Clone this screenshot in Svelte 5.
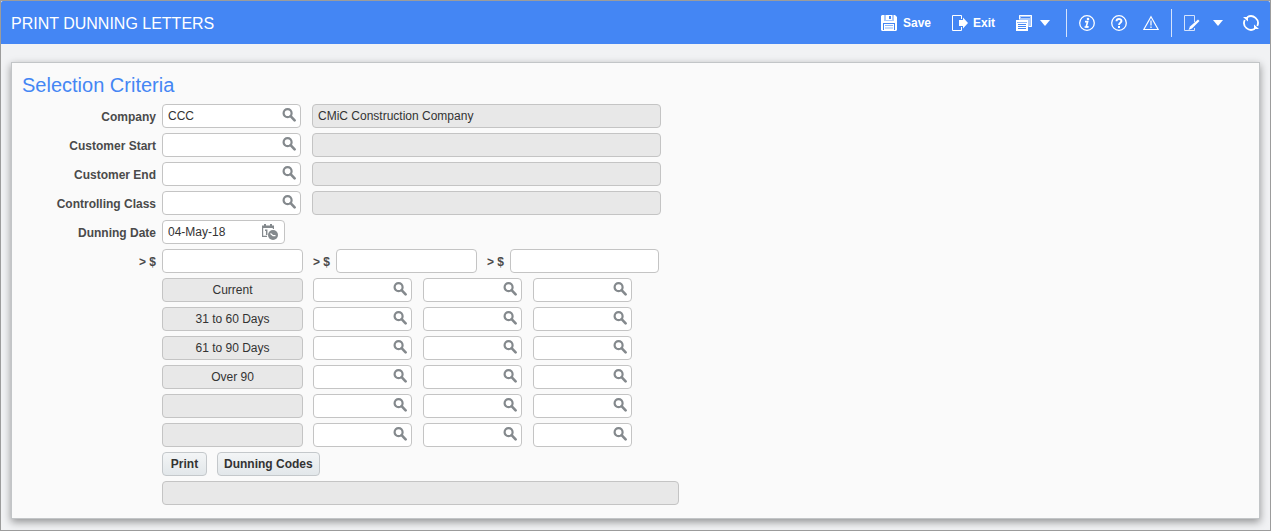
<script>
    let company = $state('CCC');
    let companyName = $state('CMiC Construction Company');
    let dunningDate = $state('04-May-18');
    let message = $state('');

    let selections = $state([
        { id: 'customerStart', label: 'Customer Start', value: '', name: '' },
        { id: 'customerEnd', label: 'Customer End', value: '', name: '' },
        { id: 'controllingClass', label: 'Controlling Class', value: '', name: '' }
    ]);

    let amounts = $state(['', '', '']);

    let agings = $state([
        { period: 'Current', codes: ['', '', ''] },
        { period: '31 to 60 Days', codes: ['', '', ''] },
        { period: '61 to 90 Days', codes: ['', '', ''] },
        { period: 'Over 90', codes: ['', '', ''] },
        { period: '', codes: ['', '', ''] },
        { period: '', codes: ['', '', ''] }
    ]);
</script>

{#snippet searchButton(title)}
    <button type="button" class="pick" aria-label={title}>
        <svg width="14" height="14" viewBox="0 0 14 14" fill="none" stroke="#84898d">
            <circle cx="5.6" cy="5.2" r="4" stroke-width="2.2" />
            <path d="M8.6 8.2L12.6 12.4" stroke-width="2.6" stroke-linecap="round" />
        </svg>
    </button>
{/snippet}

<div class="page">
    <header>
        <h1>PRINT DUNNING LETTERS</h1>
        <div class="toolbar">
            <button type="button" class="tool save">
                <svg width="16" height="16" viewBox="0 0 16 16">
                    <path d="M1 0H14L16 2V15L15 16H1L0 15V1Z" fill="#fff" />
                    <path d="M3 0H13V6H3Z" fill="#a9c8fb" />
                    <path d="M5 0H11V5H5Z" fill="#fff" />
                    <path d="M8 1H10V4H8Z" fill="#4486f4" />
                    <path d="M2 8H14V15H2Z" fill="#4486f4" />
                    <path d="M3 9H13V15H3Z" fill="#fff" />
                    <path d="M4 10.5H12M4 13H12" stroke="#8db6f9" />
                </svg>
                Save
            </button>
            <button type="button" class="tool exit">
                <svg width="16" height="16" viewBox="0 0 16 16">
                    <path d="M9.5 4V.5H.5V15.5H9.5V12" fill="none" stroke="#fff" />
                    <path d="M7 5H11V2.5L16 8L11 13.5V11H7Z" fill="#fff" />
                </svg>
                Exit
            </button>
            <button type="button" class="tool reports" aria-label="Reports">
                <svg width="16" height="16" viewBox="0 0 16 16">
                    <path d="M3 0H16V12H12V5H3Z" fill="#a9c8fb" />
                    <path d="M3.5 4V.5H15.5V11.5H13" fill="none" stroke="#fff" />
                    <path d="M5 2.5H14" stroke="#4486f4" />
                    <path d="M0 5H12V16H0Z" fill="#fff" />
                    <path d="M1 7.5H11" stroke="#8db6f9" />
                    <path d="M2 9.5H10M2 11.5H10M2 13.5H10" stroke="#4486f4" />
                </svg>
                <svg width="10" height="6" viewBox="0 0 10 6"><path d="M0 0H10L5 6Z" fill="#fff" /></svg>
            </button>
            <span class="divider"></span>
            <button type="button" class="tool" aria-label="Information">
                <svg width="16" height="16" viewBox="0 0 16 16">
                    <circle cx="8" cy="8" r="7.3" fill="none" stroke="#fff" stroke-width="1.3" />
                    <circle cx="9" cy="4" r="1.3" fill="#fff" />
                    <path d="M6 6.7H8.6L7.2 11.8H9.6" fill="none" stroke="#fff" stroke-width="1.7" />
                    <path d="M5.4 12H9.2" stroke="#fff" stroke-width="1.2" />
                </svg>
            </button>
            <button type="button" class="tool" aria-label="Help">
                <svg width="16" height="16" viewBox="0 0 16 16">
                    <circle cx="8" cy="8" r="7.3" fill="none" stroke="#fff" stroke-width="1.3" />
                    <path d="M5.5 6.3C5.5 3.2 10.5 3.2 10.5 6.1C10.5 7.7 8 7.8 8 10" fill="none" stroke="#fff" stroke-width="1.9" />
                    <path d="M7 11H9V13H7Z" fill="#fff" />
                </svg>
            </button>
            <button type="button" class="tool" aria-label="Warnings">
                <svg width="16" height="16" viewBox="0 0 16 16">
                    <path d="M8 1.8L15.2 14.5H.8Z" fill="none" stroke="#fff" stroke-width="1.2" />
                    <path d="M8 5.5V10.5M8 11.5V13" stroke="#d5e3fc" stroke-width="1.6" />
                </svg>
            </button>
            <span class="divider second"></span>
            <button type="button" class="tool edit" aria-label="Edit">
                <svg width="16" height="16" viewBox="0 0 16 16">
                    <path d="M10.5 7V.5H.5V15.5H10.5V13" fill="none" stroke="#d5e3fc" />
                    <path d="M14 4.5L15.5 6L8 13.5L4.5 15L6 11.5Z" fill="#fff" />
                </svg>
                <svg width="10" height="6" viewBox="0 0 10 6"><path d="M0 0H10L5 6Z" fill="#fff" /></svg>
            </button>
            <button type="button" class="tool" aria-label="Refresh">
                <svg width="16" height="16" viewBox="0 0 16 16" fill="none" stroke="#fff" stroke-width="1.8">
                    <path d="M4.2 2.2A7 7 0 0 1 14.3 11" />
                    <path d="M11.8 13.8A7 7 0 0 1 1.7 5" />
                    <path d="M0 2H5V6.5ZM16 14H11V9.5Z" fill="#fff" stroke="none" />
                </svg>
            </button>
        </div>
    </header>

    <main>
        <h2>Selection Criteria</h2>
        <form onsubmit={(e) => e.preventDefault()}>
            <div class="row">
                <label class="caption" for="company">Company</label>
                <div class="field code">
                    <input id="company" bind:value={company}>
                    {@render searchButton('Search company')}
                </div>
                <input class="field readonly name" aria-label="Company name" value={companyName} readonly>
            </div>

            {#each selections as item}
                <div class="row">
                    <label class="caption" for={item.id}>{item.label}</label>
                    <div class="field code">
                        <input id={item.id} bind:value={item.value}>
                        {@render searchButton('Search ' + item.label)}
                    </div>
                    <input class="field readonly name" aria-label="{item.label} name" value={item.name} readonly>
                </div>
            {/each}

            <div class="row">
                <label class="caption" for="dunningDate">Dunning Date</label>
                <div class="field date">
                    <input id="dunningDate" bind:value={dunningDate}>
                    <button type="button" class="pick calendar" aria-label="Select date">
                        <svg width="16" height="16" viewBox="0 0 16 16" fill="#84898d">
                            <path d="M0 1.5H2V0H4V1.5H8V0H10V1.5H12V4H0Z" />
                            <path d="M.6 3V12.4H5M11.4 3V5" fill="none" stroke="#84898d" stroke-width="1.2" />
                            <path d="M3 6.2H4.7V11" fill="none" stroke="#84898d" stroke-width="1.5" />
                            <circle cx="11" cy="11" r="5" />
                            <path d="M8.5 9.5L11 11.7H13.5" fill="none" stroke="#fff" stroke-width="1.2" />
                        </svg>
                    </button>
                </div>
            </div>

            <!-- Minimum amounts -->
            <div class="row amounts">
                {#each amounts as amount, i}
                    <label class="caption" for="amount{i}">&gt; $</label>
                    <input class="field amount" id="amount{i}" bind:value={amounts[i]}>
                {/each}
            </div>

            <!-- Dunning codes for each aging period -->
            {#each agings as aging, row}
                <div class="row indent">
                    <input class="field readonly period" aria-label="Period {row + 1}" value={aging.period} readonly>
                    {#each aging.codes as code, col}
                        <div class="field lookup">
                            <input aria-label="Period {row + 1} code {col + 1}" bind:value={aging.codes[col]}>
                            {@render searchButton('Search code')}
                        </div>
                    {/each}
                </div>
            {/each}

            <div class="row indent">
                <button type="button" class="action">Print</button>
                <button type="button" class="action">Dunning Codes</button>
            </div>
            <div class="row indent">
                <input class="field readonly message" aria-label="Message" value={message} readonly>
            </div>
        </form>
    </main>
</div>

<style>
    :global(body) {
        background-color: #f1f2f4;
    }

    .page {
        box-sizing: border-box;
        min-height: 100vh;
        border: 1px solid #9c9c9c;
        background-color: #f1f2f4;
        font-family: "Liberation Sans", Arial, Helvetica, sans-serif;
        font-size: 12px;
        color: #333;
    }

    header {
        display: flex;
        align-items: center;
        justify-content: space-between;
        height: 43px;
        padding: 0 11px 0 10px;
        border-radius: 2px 2px 0 0;
        background-color: #4486f4;
        color: #fff;
    }

    h1 {
        margin: 0;
        padding-top: 2px;
        font-size: 16px;
        line-height: 20px;
        font-weight: normal;
    }

    .toolbar {
        display: flex;
        align-items: center;
        gap: 16px;
    }

    .tool {
        display: flex;
        align-items: center;
        gap: 6px;
        padding: 0;
        border: none;
        background: none;
        color: #fff;
        font: bold 12px/16px "Liberation Sans", Arial, sans-serif;
        cursor: pointer;
    }

    .save {
        margin-right: 5px;
    }

    .exit {
        gap: 5px;
        margin-right: 5px;
    }

    .reports {
        gap: 8px;
    }

    .edit {
        gap: 13px;
        margin-right: 4px;
    }

    .divider {
        width: 1px;
        height: 28px;
        margin-right: -4px;
        background-color: #d5e3fc;
    }

    .second {
        margin-left: -4px;
    }

    svg {
        display: block;
        flex: none;
    }

    main {
        margin: 18px 10px 11px;
        padding: 10px 10px 13px;
        border: 1px solid #c2c5c7;
        background-color: #fafafa;
        box-shadow: 0 3px 8px rgba(0, 0, 0, 0.4);
    }

    h2 {
        margin: 0 0 7px;
        font-size: 20px;
        line-height: 24px;
        font-weight: normal;
        color: #4486f4;
    }

    form {
        display: flex;
        flex-direction: column;
        gap: 5px;
    }

    .row {
        display: flex;
        align-items: center;
    }

    .indent {
        padding-left: 140px;
        gap: 10px;
    }

    .caption {
        width: 134px;
        margin-right: 6px;
        padding-top: 2px;
        text-align: right;
        font-weight: bold;
        color: #4a4a4a;
    }

    .amounts .caption ~ .caption {
        width: 17px;
        margin-left: 10px;
    }

    .field {
        box-sizing: border-box;
        height: 24px;
        border: 1px solid #c4c4c4;
        border-radius: 4px;
        background-color: #fff;
    }

    div.field {
        display: flex;
        align-items: center;
        padding-right: 4px;
    }

    input {
        min-width: 0;
        padding: 0 5px;
        outline: none;
        font: 12px/22px "Liberation Sans", Arial, sans-serif;
        color: #333;
    }

    div.field input {
        flex: 1;
        border: none;
        background: none;
    }

    .field:focus-within {
        border-color: #4486f4;
    }

    .readonly {
        background-color: #e8e8e8;
    }

    .code {
        width: 139px;
        margin-right: 11px;
    }

    .name {
        width: 349px;
    }

    .date {
        width: 123px;
    }

    .amount {
        width: 141px;
    }

    .amount:last-child {
        width: 149px;
    }

    .period {
        width: 141px;
        text-align: center;
    }

    .lookup {
        width: 99px;
        margin-right: 1px;
    }

    .message {
        width: 517px;
    }

    .pick {
        flex: none;
        padding: 0 0 2px;
        border: none;
        background: none;
        cursor: pointer;
    }

    .calendar {
        margin-right: 2px;
        padding: 0;
    }

    .action {
        min-width: 45px;
        height: 24px;
        padding: 0 6px;
        border: 1px solid #c4c8cb;
        border-radius: 4px;
        background: linear-gradient(#f3f5f6, #e2e7ea);
        font: bold 12px/20px "Liberation Sans", Arial, sans-serif;
        color: #333;
        cursor: pointer;
    }

    .action:hover {
        background: #e2e7ea;
    }
</style>
